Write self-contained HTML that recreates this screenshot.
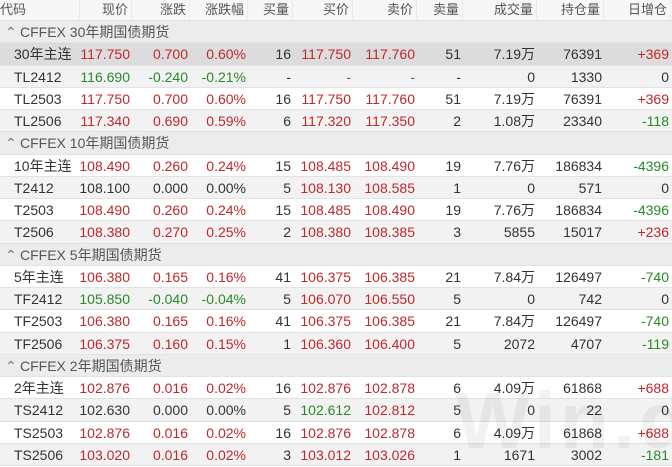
<!DOCTYPE html><html><head><meta charset="utf-8"><style>
*{margin:0;padding:0;box-sizing:border-box}
body{width:672px;height:464px;overflow:hidden;background:#fff;font-family:"Liberation Sans","Noto Sans CJK SC",sans-serif;font-size:14px;color:#333;position:relative}
.r{position:absolute;left:0;width:672px;height:22.26px;line-height:22px;border-bottom:1px solid #e2e2e2}
.r span{position:absolute;top:0;text-align:right;white-space:nowrap}
.h{top:0;height:21px;line-height:20px;background:#f7f7f7;color:#555;font-size:13px}
.h span{border-right:1px solid #ececec;padding-right:3px}
.g{background:#ececec;color:#555}
.w{background:#fff}.e{background:#f2f2f2}.s{background:#dcdcdc}
.R{color:#c0282c}.G{color:#2a8a2a}
.wm{position:absolute;left:455px;top:375px;font-size:80px;font-weight:bold;color:rgba(0,0,0,0.05);font-family:"Liberation Sans",sans-serif;letter-spacing:4px}
</style></head><body>
<div id="t"></div>
<div class="wm">Win.d</div>
<script>
var L=[0,78,130,188,246,291,351,415,461,535,602],Rr=[78,130,188,246,291,351,415,461,535,602,669];
var H=["代码","现价","涨跌","涨跌幅","买量","买价","卖价","卖量","成交量","持仓量","日增仓"];
function sgn(v){return v.charAt(0)=='-'&&v.length>1?'G':(v.charAt(0)=='+'?'R':'')}
var G=[["CFFEX 30年期国债期货",[
["30年主连","117.750","0.700","0.60%","16","117.750","117.760","51","7.19万","76391","+369","R","R","R"],
["TL2412","116.690","-0.240","-0.21%","-","-","-","-","0","1330","0","G","G","G"],
["TL2503","117.750","0.700","0.60%","16","117.750","117.760","51","7.19万","76391","+369","R","R","R"],
["TL2506","117.340","0.690","0.59%","6","117.320","117.350","2","1.08万","23340","-118","R","R","R"]]],
["CFFEX 10年期国债期货",[
["10年主连","108.490","0.260","0.24%","15","108.485","108.490","19","7.76万","186834","-4396","R","R","R"],
["T2412","108.100","0.000","0.00%","5","108.130","108.585","1","0","571","0","","R","R"],
["T2503","108.490","0.260","0.24%","15","108.485","108.490","19","7.76万","186834","-4396","R","R","R"],
["T2506","108.380","0.270","0.25%","2","108.380","108.385","3","5855","15017","+236","R","R","R"]]],
["CFFEX 5年期国债期货",[
["5年主连","106.380","0.165","0.16%","41","106.375","106.385","21","7.84万","126497","-740","R","R","R"],
["TF2412","105.850","-0.040","-0.04%","5","106.070","106.550","5","0","742","0","G","R","R"],
["TF2503","106.380","0.165","0.16%","41","106.375","106.385","21","7.84万","126497","-740","R","R","R"],
["TF2506","106.375","0.160","0.15%","1","106.360","106.400","5","2072","4707","-119","R","R","R"]]],
["CFFEX 2年期国债期货",[
["2年主连","102.876","0.016","0.02%","16","102.876","102.878","6","4.09万","61868","+688","R","R","R"],
["TS2412","102.630","0.000","0.00%","5","102.612","102.812","5","0","22","0","","G","R"],
["TS2503","102.876","0.016","0.02%","16","102.876","102.878","6","4.09万","61868","+688","R","R","R"],
["TS2506","103.020","0.016","0.02%","3","103.012","103.026","1","1671","3002","-181","R","R","R"]]]];
var h='<div class="r h">';
for(var i=0;i<11;i++){h+='<span style="left:'+L[i]+'px;width:'+(Rr[i]-L[i]+2)+'px;'+(i==0?'text-align:left;':'')+'">'+H[i]+'</span>';}
h+='</div>';
var y=21,first=true;
G.forEach(function(g){
 h+='<div class="r g" style="top:'+y+'px"><span style="left:5px;text-align:left;color:#777">&#8963;</span><span style="left:20px;text-align:left">'+g[0]+'</span></div>';y+=22.26;
 g[1].forEach(function(d,k){
  var cls=first?'s':(k%2?'e':'w');first=false;
  h+='<div class="r '+cls+'" style="top:'+y+'px">';
  for(var i=0;i<11;i++){
   var c='';
   if(i>=1&&i<=3)c=d[11];
   if(i==5)c=d[12];
   if(i==6)c=d[13];
   if(i==10)c=sgn(d[10]);
   var st=i==0?'left:14px;text-align:left':'left:'+L[i]+'px;width:'+(Rr[i]-L[i])+'px';
   h+='<span class="'+c+'" style="'+st+'">'+d[i]+'</span>';
  }
  h+='</div>';y+=22.26;
 });
});
document.getElementById('t').innerHTML=h;
</script>
</body></html>
